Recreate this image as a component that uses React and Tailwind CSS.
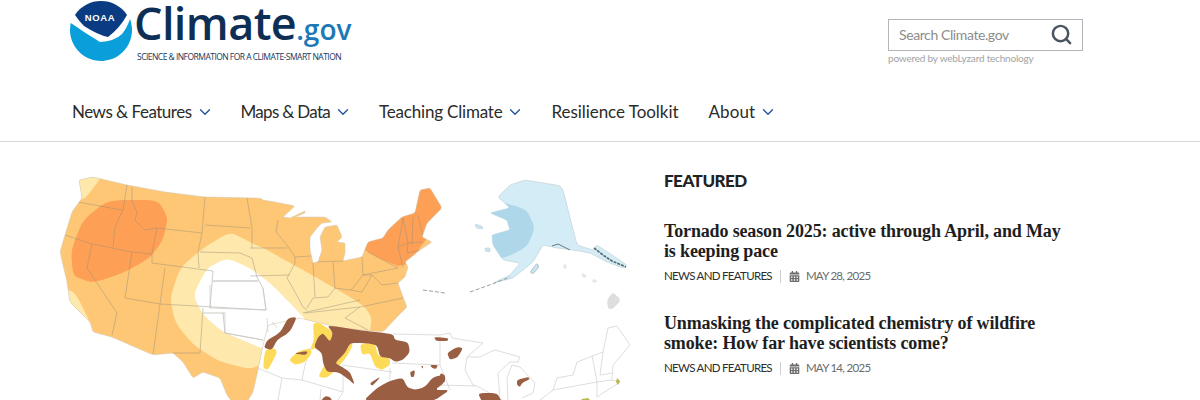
import { ChevronDown, Search } from 'lucide-react'
import { FaCalendarAlt } from 'react-icons/fa'

// closed path through a list of "x,y" points, corners slightly rounded
function blob(points, t = 0.3) {
  const p = points.trim().split(/\s+/).map((s) => s.split(',').map(Number))
  const lerp = (a, b, k) => [a[0] + (b[0] - a[0]) * k, a[1] + (b[1] - a[1]) * k]
  let d = ''
  p.forEach((pt, i) => {
    const a = lerp(pt, p[(i - 1 + p.length) % p.length], t)
    const b = lerp(pt, p[(i + 1) % p.length], t)
    d += `${i === 0 ? 'M' : 'L'}${a[0]},${a[1]} Q${pt[0]},${pt[1]} ${b[0]},${b[1]} `
  })
  return d + 'Z'
}

const usOutline = blob(`79,180 93,177 127,185 165,192 205,197 260,198 263,200 275,202 295,206 283,217 290,218 305,211 305,213 295,217 302,217
  325,217 332,222 322,223 317,228 310,237 310,250 313,263 318,262 322,250 320,237 325,227 337,225 342,237 337,242 345,243 345,253 343,261
  362,257 368,242 383,238 388,230 402,217 415,213 420,190 430,188 442,208 427,223 422,237 432,242 420,250 405,262 408,267 405,277 398,283 403,297 407,307
  397,317 383,332 340,328 300,318 268,325 263,345 258,370 253,392 247,402 232,402 227,395 220,378 203,372 193,378 183,362 173,353 153,355 112,337 93,332
  90,322 70,302 67,282 60,252 65,235 72,212 82,198`, 0.12)

const alaskaOutline = blob(`498,197 510,185 525,180 562,186 577,245 593,250 597,245 627,265 623,268 607,262 590,253 573,250 557,248 543,245 533,262
  513,278 493,283 510,275 520,263 503,260 493,245 492,235 510,230 507,220 490,213 510,208`, 0.12)

const brown = [
  `297,317 288,318 280,333 267,340 264,348 272,350 277,340 290,332`,
  `327,325 358,330 393,334 395,340 408,342 410,352 403,360 395,362 390,358 380,357 377,345 365,343 350,343 345,353 335,363 342,367 350,372
   355,385 347,378 338,372 327,372 323,363 322,353 314,347 318,337 323,333 330,342 333,333`,
  `362,402 378,387 392,380 403,378 407,387 415,390 425,387 433,377 443,375 445,382 435,390 450,390 432,402`,
  `370,383 380,377 378,380 372,386`,
  `295,353 308,351 306,355 297,354`,
  `410,372 415,370 414,377 411,377`,
  `430,365 438,365 436,369 432,368`,
  `421,366 423,366 423,369`,
  `447,353 457,347 463,348 458,357 450,360`,
  `434,337 448,338 448,341 436,341`,
  `440,373 445,375 445,382 440,383`,
  `478,393 497,393 502,402 482,402`,
  `517,380 528,377 530,379 522,383 520,387 517,385`,
  `320,402 325,396 330,397 333,402`,
]

const yellow = [
  `265,350 263,368 268,370 277,353 275,348`,
  `289,360 297,352 310,348 312,353 305,362 295,365`,
  `313,323 320,323 333,332 333,342 328,345 322,345 326,362 318,377 327,378 336,370 333,362 316,348 310,350 314,340`,
  `333,365 342,355 350,342 353,345 346,358 337,368`,
  `360,345 362,355 370,353 375,367 382,370 390,365 390,358 378,356 375,344 365,343`,
  `385,343 393,343 392,347 387,347`,
]

function ClimateMap() {
  return (
    <svg width="640" height="258" viewBox="0 142 640 258" className="block">
      <defs>
        <clipPath id="us">
          <path d={usOutline} />
        </clipPath>
        <clipPath id="ak">
          <path d={alaskaOutline} />
        </clipPath>
      </defs>

      {/* lower map, state lines */}
      <g fill="none" stroke="#d4d4d4" strokeWidth="0.8" strokeLinejoin="round">
        <path d="M255,367 L282,378 L302,380 L343,392 L338,400 M282,378 L278,400 M302,380 L305,365 L310,348 M321,389 L320,400 M342,365 L392,372 M343,367 L343,392 M390,368 L390,400 M392,363 L440,365 L450,390 M440,335 L440,365" />
        <path d="M393,334 L440,335 L450,333 L452,338 L483,343 L467,357 L465,370 L473,385 L477,386 L502,400 M440,385 L475,386" />
        <path d="M467,357 L480,357 L490,352 L495,350 L520,357 L518,362 L510,362 L498,373 L500,400 M508,400 L507,378 L512,365 L520,367 L535,383 L533,393 L522,398" />
        <path d="M553,390 L557,378 L573,375 L577,362 L590,357 L603,352 L608,328 L617,326 L630,345 L613,365 L612,380 L620,382 L597,397 M553,390 L597,382 M592,355 L597,382 M603,352 L600,375 L612,373 M597,382 L612,380 M597,382 L597,397 M553,390 L540,400" />
      </g>

      {/* upper map */}
      <path d={usOutline} fill="#fec776" />
      <g clipPath="url(#us)">
        <path d={blob('70,176 104,174 84,200 70,200')} fill="#fee8ab" />
        <path d={blob('60,288 75,292 92,326 70,316')} fill="#fee8ab" />
        <path d={blob('170,298 180,268 203,248 230,232 250,242 267,250 317,278 350,297 365,307 372,318 368,345 300,345 263,364 250,369 220,362 193,345 175,322')} fill="#fee8ab" />
        <path d={blob('193,295 207,268 227,258 250,268 270,283 297,310 310,325 304,345 263,349 247,342 223,332 203,315')} fill="#ffffff" />
        <path d={blob('71,250 83,220 108,200 158,200 168,218 163,240 150,258 123,273 93,283 73,276')} fill="#fd9f55" />
        <path d="M360,248 L368,252 L383,260 L398,266 L408,264 L455,200 L420,175 L375,220 Z" fill="#fd9f55" />
      </g>
      <path d={usOutline} fill="none" stroke="#cfc8b8" strokeWidth="0.5" />
      <g clipPath="url(#us)" fill="none" stroke="#958d7c" strokeWidth="0.6" opacity="0.75" strokeLinejoin="round">
        <path d="M78,202 L122,210 M127,185 L123,210 L115,227 L113,247 M132,187 L132,202 L137,212 L135,220 L145,230 L157,228 L202,233 M157,228 L152,253 L152,263" />
        <path d="M65,235 L92,244 L132,252 L152,254 M92,244 L87,268 L117,313 L112,335 M132,252 L125,298 L160,304 L165,268 M152,263 L213,271 L210,308 M160,304 L153,355 M203,308 L200,353 L173,353 M160,304 L266,310" />
        <path d="M205,197 L202,233 L198,252 L199,268 M205,225 L250,228 M200,252 L240,253 L252,258 L257,277 L263,288 L266,310 M247,198 L252,228 L252,248 M213,281 L258,281 M223,313 L225,333 L263,340 M203,313 L225,313" />
        <path d="M278,220 L276,232 L287,245 L295,257 L295,263 L287,278 L295,292 L303,307 L307,310 M250,248 L287,248 M250,276 L290,275 M313,263 L315,297 M295,257 L312,256 M307,308 L313,298 L328,297 L335,288 L350,290 L353,288 M333,262 L335,288 M313,262 L343,261 M362,257 L363,275 L353,288" />
        <path d="M368,252 L398,268 M363,275 L398,268 M363,275 L372,275 L362,292 L350,290 M372,275 L382,285 L398,283 M305,313 L360,307 L403,298 M360,307 L345,318 L368,330 M303,313 L360,300 M398,247 L403,218 M408,243 L398,247 M403,218 L408,243 L407,253 M413,217 L412,245 M418,215 L423,237 M408,243 L423,242 M407,253 L420,250 M398,247 L403,267" />
      </g>

      {/* faint lines in the white core */}
      <g fill="none" stroke="#c9c9c9" strokeWidth="0.7">
        <path d="M213,281 L258,281 M263,288 L266,310 M210,285 L210,308 M210,308 L266,310 M225,313 L225,333 L263,340 M267,318 L268,332 M272,322 L277,328" />
      </g>

      {/* lower map, drought areas */}
      {yellow.map((d) => (
        <path key={d} d={blob(d)} fill="#fddb59" />
      ))}
      {brown.map((d) => (
        <path key={d} d={blob(d)} fill="#9a5e42" />
      ))}
      <path d="M617,378 L620,381 L618,385 L616,382 Z M582,399 L588,398 L590,400 L581,400 Z" fill="#b8b84a" />

      {/* alaska and hawaii */}
      <path d={alaskaOutline} fill="#d4ecf5" stroke="#b4c4cb" strokeWidth="0.5" />
      <g clipPath="url(#ak)">
        <path d={blob('480,200 510,204 527,210 535,228 527,247 505,258 480,258')} fill="#aed8ea" />
      </g>
      <path d="M594,248 L603,255 L612,261 L626,267" fill="none" stroke="#56666c" strokeWidth="1.6" strokeDasharray="3 1" />
      <path d="M552,246 L558,244 L570,250" fill="none" stroke="#6c7a80" strokeWidth="1" />
      <path d="M423,290 L445,293 M470,292 L495,283 L510,277" fill="none" stroke="#8b9599" strokeWidth="0.9" strokeDasharray="4 2" />
      <path d={blob('475,224 482,226 483,229 476,228')} fill="#c9e5f1" stroke="#b4c4cb" strokeWidth="0.5" />
      <path d={blob('485,248 490,248 490,252 485,251')} fill="#c9e5f1" stroke="#b4c4cb" strokeWidth="0.5" />
      <path d={blob('530,272 537,263 539,267 533,274')} fill="#c9e5f1" stroke="#8b9599" strokeWidth="0.5" />
      <path d={blob('607,300 613,292 621,300 613,309 608,309')} fill="#dedede" />
      <path d={blob('563,265 566,264 567,268 564,269')} fill="#e6e6e6" />
      <path d={blob('581,273 585,274 587,277 583,278')} fill="#e6e6e6" />
      <path d={blob('593,279 597,280 596,283 592,282')} fill="#e6e6e6" />
    </svg>
  )
}

function Logo() {
  return (
    <div className="flex ml-[70px]">
      <svg width="63" height="63" viewBox="0 0 63 63" className="shrink-0">
        <path d="M0.8,23 Q15,33 30,42 Q45,41 52,34 Q57,28 60,19 A31,31 0 1 1 0.8,23 Z" fill="#0a9edb" />
        <path d="M5,15 A31,31 0 0 1 57,15 Q50,28 38,37 Q28,35 14,26 Q9,21 5,15 Z" fill="#0b3b82" />
        <text x="30" y="21" textAnchor="middle" fill="#ffffff" letterSpacing="0.6" className="font-['Liberation_Sans'] font-bold text-[9.5px]">NOAA</text>
      </svg>
      <div className="ml-px flex flex-col items-start">
        <div className="flex items-baseline h-[44px] pt-[1px]">
          <span className="font-['Open_Sans'] font-semibold text-[45px] leading-[44px] tracking-[-0.6px] text-[#0d2f55]">Climate</span>
          <span className="font-['Open_Sans'] font-semibold text-[28px] leading-[44px] text-[#1b79b8]">.gov</span>
        </div>
        <div className="ml-[3px] mt-[7px] font-['Open_Sans'] text-[8.5px] leading-[12px] tracking-[-0.53px] text-[#14365c] whitespace-nowrap">
          SCIENCE &amp; INFORMATION FOR A CLIMATE-SMART NATION
        </div>
      </div>
    </div>
  )
}

function SearchBox() {
  return (
    <div className="mr-[117px] mt-[19px] w-[195px]">
      <div className="h-[32px] border border-[#b4b4bc] flex items-center justify-between pl-[10px] pr-[9px]">
        <span className="text-[14px] tracking-[-0.4px] pb-[2px] text-[#8c8c8c]">Search Climate.gov</span>
        <Search size={23} strokeWidth={2.6} className="text-[#4a5560] mb-[1px]" />
      </div>
      <div className="text-[10px] leading-[13px] mt-[1px] text-[#a3a3a3] tracking-[-0.2px]">powered by webLyzard technology</div>
    </div>
  )
}

const navItems = [
  { label: 'News & Features', caret: true, cls: 'tracking-[-0.5px]' },
  { label: 'Maps & Data', caret: true, cls: 'tracking-[-0.7px]' },
  { label: 'Teaching Climate', caret: true, cls: 'tracking-[-0.2px]' },
  { label: 'Resilience Toolkit', cls: 'tracking-[-0.05px] mr-[3px]' },
  { label: 'About', caret: true, cls: 'tracking-[0.1px]' },
]

function Meta({ date }) {
  return (
    <div className="mt-[7px] flex items-center text-[11.5px] leading-[16px] tracking-[-0.7px]">
      <span className="text-[#2e2e2e]">NEWS AND FEATURES</span>
      <span className="mx-[8px] h-[13px] w-px bg-[#cfcfcf]" />
      <FaCalendarAlt size={11} className="text-[#6d6d6d] mr-[6px]" />
      <span className="text-[#6a6a6a]">{date}</span>
    </div>
  )
}

export default function App() {
  return (
    <div className="w-[1200px] h-[400px] overflow-hidden bg-white font-['Lato',sans-serif] text-[#222]">
      <header className="h-[142px] border-b border-[#d8d8d8]">
        <div className="flex justify-between h-[86px]">
          <Logo />
          <SearchBox />
        </div>
        <nav className="flex ml-[72px] gap-[27px] text-[17px] leading-[24px] mt-[14px]">
          {navItems.map((item) => (
            <a key={item.label} className={`flex items-center text-[#2b2b2b] whitespace-nowrap ${item.cls}`}>
              {item.label}
              {item.caret && <ChevronDown size={18} strokeWidth={1.8} className="ml-[4px] text-[#21539e]" />}
            </a>
          ))}
        </nav>
      </header>

      <main className="flex">
        <div className="w-[664px] shrink-0">
          <ClimateMap />
        </div>
        <section className="w-[400px] pt-[27px]">
          <h2 className="text-[17px] leading-[24px] font-black tracking-[-0.5px] text-[#222]">FEATURED</h2>
          <article className="mt-[28px]">
            <h3 className="font-['Liberation_Serif',serif] font-bold text-[18px] leading-[20px] tracking-[-0.15px] text-[#1e1e1e]">
              Tornado season 2025: active through April, and May is keeping pace
            </h3>
            <Meta date="MAY 28, 2025" />
          </article>
          <article className="mt-[29px]">
            <h3 className="font-['Liberation_Serif',serif] font-bold text-[18px] leading-[20px] tracking-[-0.15px] text-[#1e1e1e]">
              Unmasking the complicated chemistry of wildfire smoke: How far have scientists come?
            </h3>
            <Meta date="MAY 14, 2025" />
          </article>
        </section>
      </main>
    </div>
  )
}
